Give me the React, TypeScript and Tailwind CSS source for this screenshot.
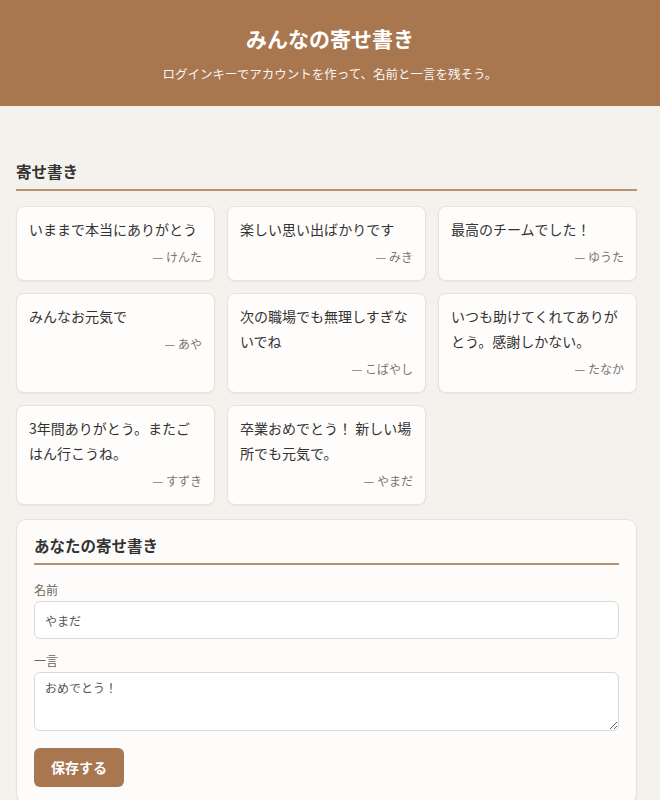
import React from "react";

const messages = [
  { text: "いままで本当にありがとう", name: "けんた" },
  { text: "楽しい思い出ばかりです", name: "みき" },
  { text: "最高のチームでした！", name: "ゆうた" },
  { text: "みんなお元気で", name: "あや" },
  { text: "次の職場でも無理しすぎないでね", name: "こばやし" },
  { text: "いつも助けてくれてありがとう。感謝しかない。", name: "たなか" },
  { text: "3年間ありがとう。またごはん行こうね。", name: "すずき" },
  { text: "卒業おめでとう！ 新しい場所でも元気で。", name: "やまだ" },
];

function MessageCard({ text, name }: { text: string; name: string }) {
  return (
    <div className="rounded-lg border border-[#e6e2dc] bg-[#fffdfb] px-3 pt-[10px] pb-3 shadow-[0_1px_2px_rgba(0,0,0,0.05)]">
      <p className="text-[14px] leading-[25px] text-[#333]">{text}</p>
      <p className="mt-1 text-right text-[12px] leading-[22px] text-[#7a7570]">— {name}</p>
    </div>
  );
}

export default function App() {
  return (
    <div
      className="min-h-[800px] bg-[#f5f2ee] text-[#333]"
      style={{ fontFamily: '"Noto Sans CJK JP", "Noto Sans", sans-serif' }}
    >
      <header className="flex h-[106px] flex-col items-center justify-center bg-[#a8764f] text-white">
        <h1 className="text-[21px] font-bold leading-[30px]">みんなの寄せ書き</h1>
        <p className="mt-[12px] text-[12.5px] leading-[18px] text-[#fbf5ef]">
          ログインキーでアカウントを作って、名前と一言を残そう。
        </p>
      </header>

      <main className="pl-4 pr-[23px] pt-[53px]">
        <h2 className="border-b-2 border-[#b8916f] pb-[6px] text-[15.5px] font-bold leading-[24px] text-[#333]">
          寄せ書き
        </h2>

        <div className="mt-[15px] grid grid-cols-3 gap-3">
          {messages.map((m) => (
            <MessageCard key={m.name} text={m.text} name={m.name} />
          ))}
        </div>

        <section className="mt-[14px] rounded-[10px] border border-[#e6e2dc] bg-[#fdfcfa] px-[17px] pt-[13px] pb-4 shadow-[0_1px_2px_rgba(0,0,0,0.05)]">
          <h2 className="border-b-2 border-[#b8916f] pb-[6px] text-[15.5px] font-bold leading-[24px] text-[#333]">
            あなたの寄せ書き
          </h2>

          <div className="mt-[16px]">
            <label className="block text-[12px] leading-[18px] text-[#6b6660]">名前</label>
            <input
              defaultValue="やまだ"
              style={{ paddingLeft: 10, paddingRight: 10 }}
              className="mt-[2px] block h-[38px] w-full rounded-md border border-[#dcd8d2] bg-white text-[12px] text-[#555] outline-none"
            />
          </div>

          <div className="mt-[13px]">
            <label className="block text-[12px] leading-[18px] text-[#6b6660]">一言</label>
            <textarea
              defaultValue="おめでとう！"
              style={{ paddingLeft: 10, paddingRight: 10, paddingTop: 6, paddingBottom: 6 }}
              className="mt-[2px] block h-[59px] w-full rounded-md border border-[#dcd8d2] bg-white text-[12px] leading-[18px] text-[#555] outline-none"
            />
          </div>

          <button
            type="button"
            className="mt-[17px] h-[39px] rounded-md bg-[#a8764f] px-[17px] text-[14px] font-bold text-white"
          >
            保存する
          </button>
        </section>
      </main>
    </div>
  );
}
